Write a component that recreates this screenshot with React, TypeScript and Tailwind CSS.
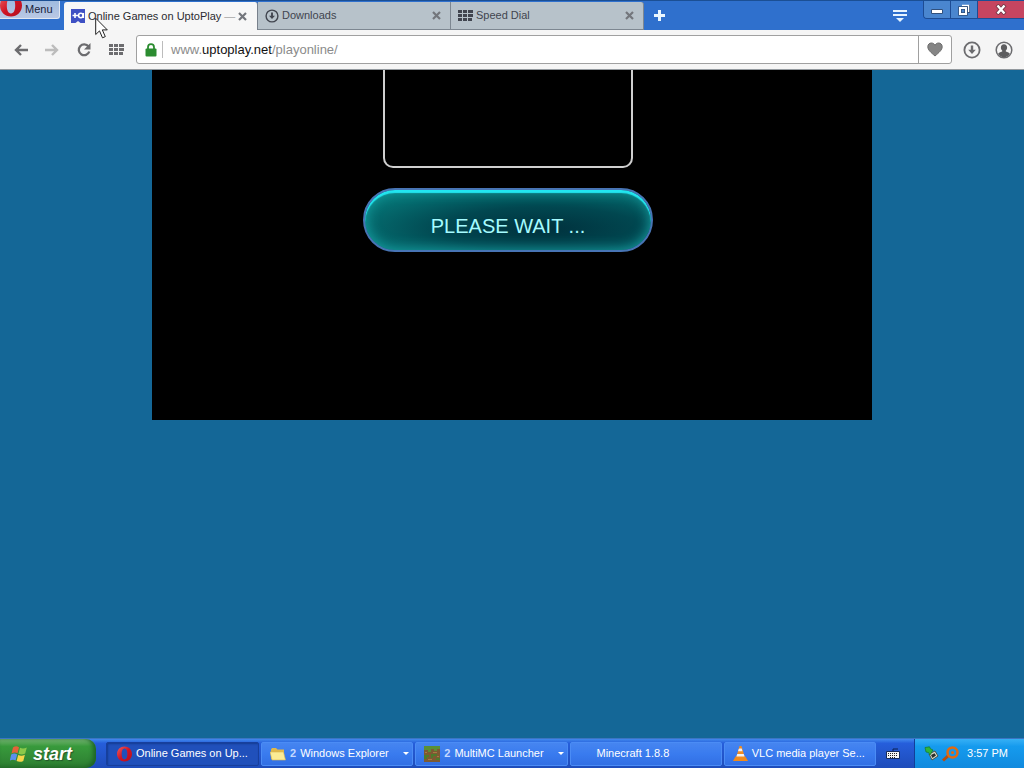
import React from "react";

function OperaIcon({ className }: { className: string }) {
  return (
    <svg viewBox="0 0 20 20" className={className} aria-hidden="true">
      <defs>
        <linearGradient id="opera" x1="0" y1="0" x2="1" y2="1">
          <stop offset="0" stopColor="#f0605f" />
          <stop offset="0.5" stopColor="#cf1425" />
          <stop offset="1" stopColor="#b3101f" />
        </linearGradient>
      </defs>
      <path
        fill="url(#opera)"
        fillRule="evenodd"
        d="M10 0C4.500 0 0 4.200 0 10s4.500 10 10 10 10-4.200 10-10S15.500 0 10 0Zm0 2.800c2.600 0 3.800 3 3.800 7.200s-1.200 7.200-3.800 7.200S6.200 14.200 6.200 10 7.400 2.800 10 2.800Z"
      />
    </svg>
  );
}

function SiteIcon() {
  return (
    <svg viewBox="0 0 14 14" className="size-[14px] shrink-0" aria-hidden="true">
      <path fill="#3f51c4" d="M0 0h14v14H9.500L7 12l-2.500 2H0Z" />
      <path stroke="#fff" strokeWidth="1.600" fill="none" d="M1.500 6.500h6M4 4v5" />
      <circle cx="9.800" cy="6.500" r="2.200" stroke="#fff" strokeWidth="1.600" fill="none" />
      <path stroke="#fff" strokeWidth="1.600" d="M12.300 4v5" />
    </svg>
  );
}

function DownloadIcon({ className }: { className: string }) {
  return (
    <svg viewBox="0 0 18 18" className={className} fill="none" aria-hidden="true">
      <circle cx="9" cy="9" r="7.600" stroke="currentColor" strokeWidth="1.800" />
      <path fill="currentColor" d="M7.800 4.500h2.400v4.200h2.600L9 13 5.200 8.700h2.600Z" />
    </svg>
  );
}

function GridIcon({ className }: { className: string }) {
  return (
    <svg viewBox="0 0 15 11" className={className} fill="currentColor" aria-hidden="true">
      <path d="M0 0h4v3H0zM5 0h4v3H5zM10 0h5v3h-5zM0 4h4v3H0zM5 4h4v3H5zM10 4h5v3h-5zM0 8h4v3H0zM5 8h4v3H5zM10 8h4v3h-4z" />
    </svg>
  );
}

function CloseIcon() {
  return (
    <svg viewBox="0 0 9 9" className="size-[9px]" aria-hidden="true">
      <path d="m1 1 7 7M8 1 1 8" stroke="#73767c" strokeWidth="2.200" />
    </svg>
  );
}

function ArrowIcon({ className }: { className: string }) {
  return (
    <svg viewBox="0 0 14 12" className={className} fill="none" aria-hidden="true">
      <path d="M14 6H2M7 1 2 6l5 5" stroke="currentColor" strokeWidth="2.400" />
    </svg>
  );
}

type TabProps = {
  icon: React.ReactNode;
  title: string;
  suffix?: string;
  active?: boolean;
};

function Tab({ icon, title, suffix, active }: TabProps) {
  return (
    <div
      className={
        active
          ? "flex h-7 w-[194px] items-center rounded-t-[3px] border-r border-[#78818c] bg-[#f7f7f7] pl-[7px] pr-[10px] text-[#2b2b30]"
          : "flex h-7 w-[193px] items-center border-r border-b border-[#7d8791] bg-[#b7c2ca] pl-[7px] pr-[9px] text-[#41454f] last-of-type:rounded-tr-[3px]"
      }
    >
      <button type="button" className="flex min-w-0 flex-1 items-center gap-[3px]">
        {icon}
        <span className="whitespace-nowrap">
          {title}
          {suffix && <span className="text-[#a5a5a5]"> {suffix}</span>}
        </span>
      </button>
      <button type="button" aria-label={"Close " + title} className="flex shrink-0">
        <CloseIcon />
      </button>
    </div>
  );
}

function TabStrip() {
  return (
    <header className="flex h-[30px] items-start border-t border-[#1b4f94] bg-[#2f70cd] text-[11px]">
      <button
        type="button"
        className="flex h-[18px] w-[60px] shrink-0 items-center overflow-hidden rounded-br-[3px] border-r border-b border-[#e1e7f2] bg-linear-to-b from-[#9fbbe0] to-[#bac8e4] text-[#17203a]"
      >
        <OperaIcon className="-mt-2 mr-[3px] h-[23px] w-[22px] shrink-0" />
        Menu
      </button>
      <div className="ml-1 mt-px flex">
        <Tab active icon={<SiteIcon />} title="Online Games on UptoPlay" suffix="—" />
        <Tab icon={<DownloadIcon className="size-[14px] shrink-0" />} title="Downloads" />
        <Tab icon={<GridIcon className="h-[11px] w-[15px] shrink-0" />} title="Speed Dial" />
      </div>
      <button type="button" aria-label="New tab" className="ml-[9px] mt-2">
        <svg viewBox="0 0 13 13" className="size-[13px]" aria-hidden="true">
          <path d="M6.500 1v11M1 6.500h11" stroke="#eaf7ff" strokeWidth="3" />
        </svg>
      </button>
      <button type="button" aria-label="Tab menu" className="ml-auto mr-4 mt-[9px]">
        <svg viewBox="0 0 14 12" className="h-3 w-[14px]" aria-hidden="true">
          <path d="M0 1h14M0 5h14" stroke="#e6f4ff" strokeWidth="2" />
          <path d="M3 8h8l-4 4Z" fill="#e6f4ff" />
        </svg>
      </button>
      <div className="flex h-[18px] overflow-hidden rounded-bl-[4px] border-b border-l border-[#1d4c94]">
        <button type="button" aria-label="Minimize" className="flex w-[27px] items-center justify-center border-r border-[#1d4c94] bg-[#4a86cf] pt-1">
          <svg viewBox="0 0 12 5" className="h-[5px] w-3" aria-hidden="true">
            <path d="M.5.5h11v4H.5z" fill="#fff" stroke="#31507c" />
          </svg>
        </button>
        <button type="button" aria-label="Restore" className="flex w-[27px] items-center justify-center border-r border-[#1d4c94] bg-[#4a86cf]">
          <svg viewBox="0 0 12 12" className="size-3" fill="none" aria-hidden="true">
            <path d="M4 2.500h6.500V9" stroke="#31507c" strokeWidth="3" />
            <path d="M4 1.500h6.500V8" stroke="#fff" strokeWidth="1.500" />
            <path d="M2 4h6v6H2z" stroke="#31507c" strokeWidth="3.600" />
            <path d="M2 4h6v6H2z" stroke="#fff" strokeWidth="2" />
          </svg>
        </button>
        <button type="button" aria-label="Close window" className="flex w-[46px] items-center justify-center bg-[#c64560]">
          <svg viewBox="0 0 12 11" className="h-[11px] w-3" aria-hidden="true">
            <path d="m2 1 8 9M10 1 2 10" stroke="#6f3544" strokeWidth="4" />
            <path d="m2.500 1.500 7 8M9.500 1.500l-7 8" stroke="#fff" strokeWidth="2.400" />
          </svg>
        </button>
      </div>
    </header>
  );
}

function Toolbar() {
  return (
    <nav className="flex h-10 items-center border-b border-[#93999e] bg-[#f5f5f5] pl-[14px] pr-[11px] text-[#6c6c6f]">
      <button type="button" aria-label="Back">
        <ArrowIcon className="h-3 w-[14px]" />
      </button>
      <button type="button" aria-label="Forward" className="ml-[17px] text-[#bcbcbc]">
        <ArrowIcon className="h-3 w-[14px] rotate-180" />
      </button>
      <button type="button" aria-label="Reload" className="ml-[18px]">
        <svg viewBox="0 0 14 14" className="size-[14px]" fill="none" aria-hidden="true">
          <path d="M11.500 3.500A5.400 5.400 0 1 0 12.300 8.500" stroke="currentColor" strokeWidth="2.300" />
          <path d="M13.500 0v6.500H7Z" fill="currentColor" />
        </svg>
      </button>
      <button type="button" aria-label="Speed Dial" className="ml-[18px]">
        <GridIcon className="h-[11px] w-[15px]" />
      </button>
      <div className="ml-3 flex h-[29px] flex-1 items-stretch rounded-[3px] border border-[#a0a0a0] bg-white">
        <label htmlFor="address" className="flex items-center pl-2">
          <svg viewBox="0 0 12 14" className="h-[14px] w-3" aria-label="Secure" role="img">
            <path d="M3 7V4.200a3 3 0 0 1 6 0V7" stroke="#2b8c30" strokeWidth="1.800" fill="none" />
            <rect x="0.500" y="5.500" width="11" height="8" rx="1" fill="#2b8c30" />
          </svg>
          <span className="ml-[5px] h-[17px] w-px bg-[#bcbcbc]" />
        </label>
        <div className="relative flex flex-1 items-center pl-2 text-[13px] text-[#8b8b8b]">
          <span aria-hidden="true">
            www.<span className="text-[#111]">uptoplay.net</span>/playonline/
          </span>
          <input
            id="address"
            aria-label="Address"
            defaultValue="www.uptoplay.net/playonline/"
            className="absolute inset-0 bg-transparent px-2 text-transparent outline-none"
          />
        </div>
        <button type="button" aria-label="Bookmark" className="flex w-[33px] items-center justify-center border-l border-[#a0a0a0]">
          <svg viewBox="0 0 16 15" className="h-[15px] w-4" aria-hidden="true">
            <path
              fill="#858585"
              stroke="#6c6c6c"
              d="M8 14C4 10.500.8 8 .8 4.700.8 2.500 2.400 1 4.400 1 6 1 7.300 1.900 8 3.200 8.700 1.900 10 1 11.600 1c2 0 3.600 1.500 3.600 3.700C15.200 8 12 10.500 8 14Z"
            />
          </svg>
        </button>
      </div>
      <button type="button" aria-label="Downloads" className="ml-[11px]">
        <DownloadIcon className="size-[18px]" />
      </button>
      <button type="button" aria-label="Account" className="ml-[14px]">
        <svg viewBox="0 0 18 18" className="size-[18px]" fill="none" aria-hidden="true">
          <circle cx="9" cy="9" r="7.800" stroke="currentColor" strokeWidth="1.500" />
          <path
            fill="#5d5d5f"
            d="M9 3.300c2 0 3.100 1.400 3.100 3.200 0 1.300-.5 2.400-1.300 3v1c2 .5 3.500 1.200 4 2.300C13.600 15 11.400 16.300 9 16.300S4.400 15 3.200 12.800c.5-1.100 2-1.800 4-2.300v-1c-.8-.6-1.300-1.700-1.300-3 0-1.800 1.100-3.200 3.100-3.200Z"
          />
        </svg>
      </button>
    </nav>
  );
}

function FolderIcon() {
  return (
    <svg viewBox="0 0 16 14" className="h-[14px] w-4 shrink-0" aria-hidden="true">
      <path fill="#e0b84c" d="M1 2.500 2 1h4l1.500 1.500H14V12H1Z" />
      <path fill="#fbeb94" stroke="#d9b650" strokeWidth=".6" d="M0 5h13.500l2 8H2Z" />
    </svg>
  );
}

function BlockIcon() {
  return (
    <svg viewBox="0 0 16 16" className="size-4 shrink-0" aria-hidden="true">
      <path fill="#7d5a32" d="M0 0h16v16H0z" />
      <path fill="#5a8f35" d="M0 0h16v3h-3v2h-3V3H7v3H4V4H0z" />
      <path fill="#4e7a2c" d="M0 9h5v2H3v2H0zM7 8h6v2H9v2H7zM12 12h4v2h-4z" />
      <path fill="#a87a44" d="M1 6h2v1H1zM9 6h4v1H9zM4 13h4v1H4zM13 10h2v1h-2z" />
    </svg>
  );
}

function ConeIcon() {
  return (
    <svg viewBox="0 0 15 15" className="size-[15px] shrink-0" aria-hidden="true">
      <path fill="#f08a1c" d="M2.500 10.500h10L15 15H0Z" />
      <path fill="#f28c20" d="M6.500 0h2L12 12H3Z" />
      <path fill="#f2f2f2" d="m5.700 3 .8-.5h2.200l.8 2.700H5ZM4.200 8h6.600l.8 2.600H3.400Z" />
    </svg>
  );
}

type TaskProps = {
  icon?: React.ReactNode;
  count?: string;
  label: string;
  active?: boolean;
};

function Task({ icon, count, label, active }: TaskProps) {
  return (
    <button
      type="button"
      className={
        active
          ? "flex h-6 max-w-[153px] flex-1 items-center gap-1 rounded-[2px] border border-[#173f9d] bg-[#2050bb] px-[10px] shadow-[inset_1px_1px_2px_#143b91]"
          : "flex h-6 max-w-[153px] flex-1 items-center gap-1 rounded-[2px] border border-[#4b8cf5] bg-linear-to-b from-[#4685f0] via-[#397bef] to-[#326fe4] px-2"
      }
    >
      {icon ?? <span className="w-[14px]" />}
      {count && <b className="text-[#c4d8ff]">{count}</b>}
      <span className="whitespace-nowrap">{label}</span>
      {count && (
        <svg viewBox="0 0 6 3" className="-mr-[5px] ml-auto h-[3px] w-[6px] shrink-0" aria-hidden="true">
          <path d="M0 0h6L3 3Z" fill="#fff" />
        </svg>
      )}
    </button>
  );
}

function Taskbar() {
  return (
    <footer className="flex h-[30px] items-center border-t border-[#3b75c3] bg-linear-to-b from-[#4289ee] via-[#265edb] via-15% to-[#1e4cba] text-[11px] text-white">
      <button
        type="button"
        className="flex h-[29px] w-24 shrink-0 items-center gap-1 rounded-r-[10px] bg-linear-to-b from-[#72b371] via-[#389a3c] via-25% to-[#2d7d31] pl-[10px] shadow-[inset_-3px_-1px_4px_#1e6426]"
      >
        <svg viewBox="0 0 19 18" className="h-[18px] w-[19px]" aria-hidden="true">
          <path fill="#e5623a" d="M3 2.500C5 1 7 1 9 2.200L7.500 8.300C5.700 7.200 3.600 7.300 1.500 8.500Z" />
          <path fill="#8bc84a" d="M10 2.800c2.200 1.200 4.400 1 6.800-.3L15.200 8.500c-2.300 1.300-4.500 1.300-6.700.3Z" />
          <path fill="#5c8fee" d="M1.200 9.600c2-1.300 4.100-1.300 6-.2L5.600 15.500C3.800 14.400 1.800 14.500-.2 15.700Z" />
          <path fill="#f6d54a" d="M8.200 10c2.200 1 4.400 1 6.700-.3l-1.600 6.200c-2.300 1.300-4.500 1.200-6.700.2Z" />
        </svg>
        <span className="text-[18px] font-bold italic leading-5 text-shadow-[1px_1px_1px_#23552a]">start</span>
      </button>
      <div className="ml-[10px] flex min-w-0 flex-1 gap-[2px]">
        <Task active icon={<OperaIcon className="h-4 w-[15px] shrink-0" />} label="Online Games on Up..." />
        <Task icon={<FolderIcon />} count="2" label="Windows Explorer" />
        <Task icon={<BlockIcon />} count="2" label="MultiMC Launcher" />
        <Task label="Minecraft 1.8.8" />
        <Task icon={<ConeIcon />} label="VLC media player Se..." />
      </div>
      <button type="button" aria-label="Keyboard layout" className="ml-[10px] mr-[14px] shrink-0">
        <svg viewBox="0 0 14 11" className="h-[11px] w-[14px]" aria-hidden="true">
          <path d="M7 3V1h5" stroke="#0d2050" fill="none" />
          <path d="M.5 3.500h13v7H.5z" fill="#f5f5f5" stroke="#142a5c" />
          <path d="M2 5.500h10M2 7.500h10M4 9.500h6" stroke="#222" strokeDasharray="1 1" />
        </svg>
      </button>
      <div className="flex h-[29px] w-[110px] shrink-0 items-center border-l border-[#123f98] bg-linear-to-b from-[#35b0f5] via-[#159bee] via-25% to-[#118ade] pl-[9px] pr-4">
        <svg viewBox="0 0 15 15" className="size-[15px]" aria-hidden="true">
          <path fill="#d9ddd0" stroke="#4a5548" d="m5 8 6-3 3 5-6 4Z" />
          <path fill="#2b2f2b" d="m7 9 3.500-1.800L12 9.500 8.500 12Z" />
          <path fill="#2fb53c" stroke="#17772a" strokeWidth=".7" d="M1 1.500 5.500.8l1 2L9 4 6 9 4.500 6.500 2 6Z" />
        </svg>
        <svg viewBox="0 0 17 16" className="ml-[3px] h-4 w-[17px]" fill="none" aria-hidden="true">
          <path d="M6.500 9.500 1 14.500" stroke="#b84d0b" strokeWidth="3" />
          <circle cx="10.500" cy="6.500" r="5" stroke="#e06a12" strokeWidth="2.500" />
          <circle cx="10.500" cy="6.500" r="1.600" fill="#e06a12" />
        </svg>
        <time className="ml-auto whitespace-nowrap">3:57 PM</time>
      </div>
    </footer>
  );
}

export default function App() {
  return (
    <div className="relative flex min-h-screen flex-col bg-[#146797] font-['Liberation_Sans',Arial,sans-serif]">
      <TabStrip />
      <Toolbar />
      <main className="flex-1">
        <section className="mx-auto flex min-h-[350px] max-w-[720px] flex-col items-center bg-black pr-2">
          <div className="h-[98px] w-[250px] rounded-b-[10px] border-2 border-t-0 border-[#cfcfcf]" />
          <button
            type="button"
            className="mt-5 h-16 w-[290px] rounded-full border-2 border-[#4774b4] bg-radial-[at_62%_65%] from-[#00313d] via-[#014750] via-40% to-[#088a88] pt-3 text-[20px] text-[#a5fbff] shadow-[inset_0_3px_1px_#22e6f0,inset_0_0_14px_#18a3a6]"
          >
            PLEASE WAIT ...
          </button>
        </section>
      </main>
      <Taskbar />
      <svg viewBox="0 0 13 22" className="pointer-events-none absolute left-[95px] top-[17px] h-[22px] w-[13px]" aria-hidden="true">
        <path d="M.7 1.200v16.300l3.800-3.600 3 6.900 2.800-1.200-3-6.700h5Z" fill="#fff" stroke="#222" />
      </svg>
    </div>
  );
}
